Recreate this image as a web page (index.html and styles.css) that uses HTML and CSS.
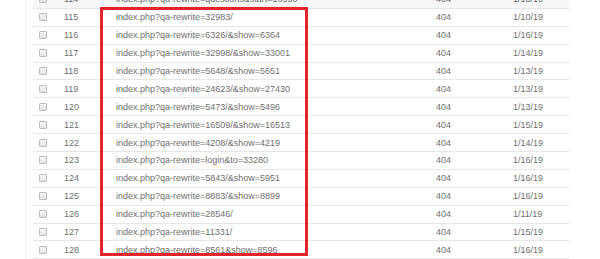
FILE: index.html
```html
<!DOCTYPE html>
<html>
<head>
<meta charset="utf-8">
<link rel="stylesheet" href="styles.css">
</head>
<body>
<div class="page">
  <div class="panel">
    <table class="grid">
      <colgroup>
        <col class="c-check"><col class="c-num"><col class="c-url"><col class="c-code"><col class="c-date">
      </colgroup>
      <tbody>
        <tr class="hover"><td><span class="cb"></span></td><td>114</td><td>index.php?qa-rewrite=questions&amp;start=16950</td><td>404</td><td>1/13/19</td></tr>
        <tr><td><span class="cb"></span></td><td>115</td><td>index.php?qa-rewrite=32983/</td><td>404</td><td>1/10/19</td></tr>
        <tr><td><span class="cb"></span></td><td>116</td><td>index.php?qa-rewrite=6326/&amp;show=6364</td><td>404</td><td>1/16/19</td></tr>
        <tr><td><span class="cb"></span></td><td>117</td><td>index.php?qa-rewrite=32998/&amp;show=33001</td><td>404</td><td>1/14/19</td></tr>
        <tr><td><span class="cb"></span></td><td>118</td><td>index.php?qa-rewrite=5648/&amp;show=5651</td><td>404</td><td>1/13/19</td></tr>
        <tr><td><span class="cb"></span></td><td>119</td><td>index.php?qa-rewrite=24623/&amp;show=27430</td><td>404</td><td>1/13/19</td></tr>
        <tr><td><span class="cb"></span></td><td>120</td><td>index.php?qa-rewrite=5473/&amp;show=5496</td><td>404</td><td>1/13/19</td></tr>
        <tr><td><span class="cb"></span></td><td>121</td><td>index.php?qa-rewrite=16509/&amp;show=16513</td><td>404</td><td>1/15/19</td></tr>
        <tr><td><span class="cb"></span></td><td>122</td><td>index.php?qa-rewrite=4208/&amp;show=4219</td><td>404</td><td>1/14/19</td></tr>
        <tr><td><span class="cb"></span></td><td>123</td><td>index.php?qa-rewrite=login&amp;to=33280</td><td>404</td><td>1/16/19</td></tr>
        <tr><td><span class="cb"></span></td><td>124</td><td>index.php?qa-rewrite=5843/&amp;show=5951</td><td>404</td><td>1/16/19</td></tr>
        <tr><td><span class="cb"></span></td><td>125</td><td>index.php?qa-rewrite=8883/&amp;show=8899</td><td>404</td><td>1/16/19</td></tr>
        <tr><td><span class="cb"></span></td><td>126</td><td>index.php?qa-rewrite=28546/</td><td>404</td><td>1/11/19</td></tr>
        <tr><td><span class="cb"></span></td><td>127</td><td>index.php?qa-rewrite=11331/</td><td>404</td><td>1/15/19</td></tr>
        <tr><td><span class="cb"></span></td><td>128</td><td>index.php?qa-rewrite=8561&amp;show=8596</td><td>404</td><td>1/16/19</td></tr>
      </tbody>
    </table>
    <div class="highlight"></div>
  </div>
</div>
</body>
</html>
```

FILE: styles.css
```css
html, body {
  margin: 0;
  padding: 0;
  background: #ffffff;
  overflow: hidden;
}
.page {
  width: 600px;
  height: 259px;
  overflow: hidden;
  padding-left: 25px;
  box-sizing: border-box;
}
.panel {
  position: relative;
  display: flex;
  flex-direction: column;
  height: 300px;
  border-left: 1px solid #f1f1f1;
  padding-left: 7px;
}
.grid {
  border-collapse: collapse;
  table-layout: fixed;
  width: 536px;
  margin-top: -9px;
  font-family: "Liberation Sans", Arial, sans-serif;
  font-size: 9px;
  color: #707070;
}
.c-check { width: 25px; }
.c-num { width: 52px; }
.c-url { width: 320px; }
.c-code { width: 77px; }
.c-date { width: 62px; }
.grid tr {
  border-bottom: 1px solid #e7e7e7;
}
.grid td {
  height: 16.9px;
  padding: 0 0 0 6px;
  line-height: 10px;
  vertical-align: middle;
  white-space: nowrap;
  overflow: hidden;
}
.grid tr.hover {
  background: #f6f6f6;
}
.cb {
  display: block;
  width: 6px;
  height: 6px;
  border: 1px solid #bdbdbd;
  border-radius: 1px;
  background: linear-gradient(#f6f6f6, #e4e4e4);
}
.highlight {
  position: absolute;
  left: 74px;
  top: 7px;
  width: 202px;
  height: 243px;
  border: 3px solid #e3242b;
}
```
